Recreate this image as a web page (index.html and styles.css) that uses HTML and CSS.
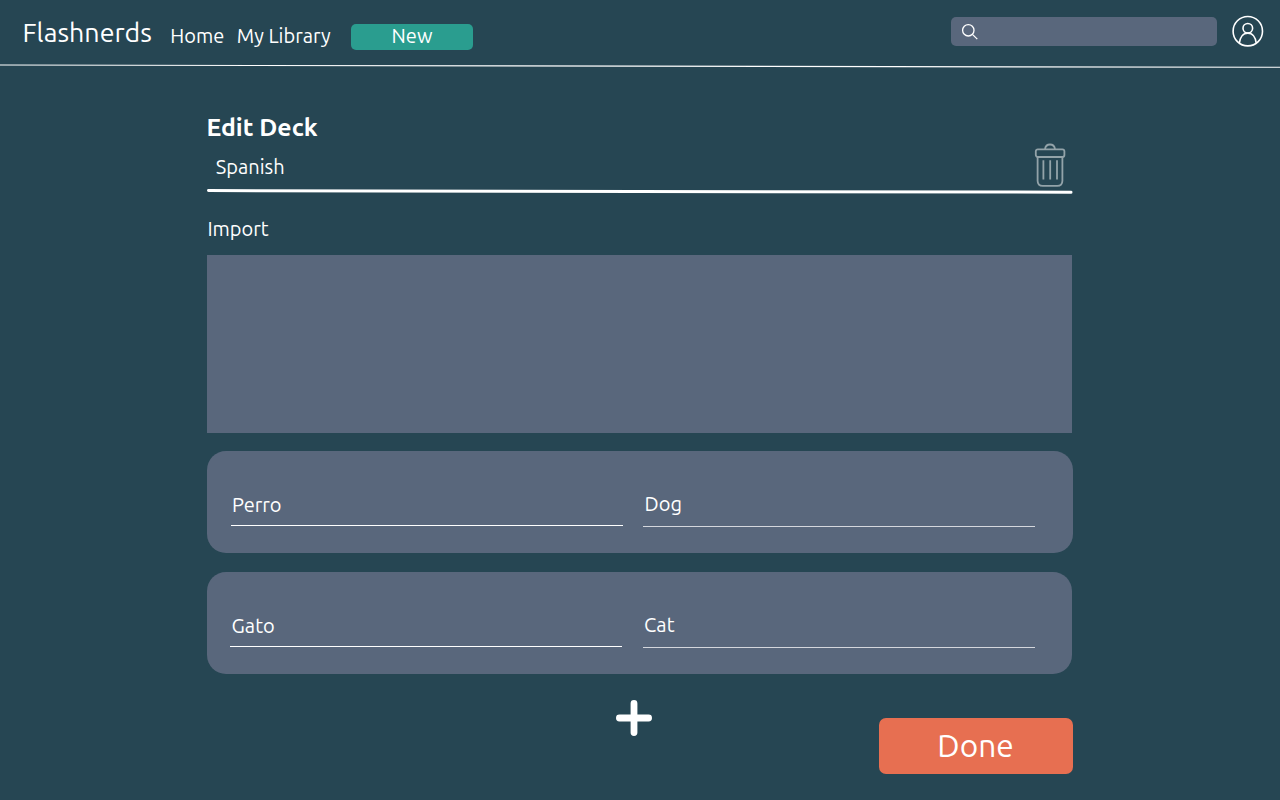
FILE: index.html
```html
<!DOCTYPE html>
<html lang="en">
<head>
<meta charset="utf-8">
<title>Flashnerds</title>
<link rel="stylesheet" href="styles.css">
</head>
<body>
<header class="topbar">
  <div class="brand">Flashnerds</div>
  <nav class="nav">
    <a class="home">Home</a>
    <a class="library">My Library</a>
  </nav>
  <button class="new"><span>New</span></button>
  <div class="search">
    <svg width="18" height="18" viewBox="0 0 18 18" fill="none" stroke="#fff" stroke-width="1.3"><circle cx="7.3" cy="7.3" r="5.7"/><path d="M11.4 11.4L16.3 16.1"/></svg>
  </div>
  <svg class="avatar" width="32" height="32" viewBox="0 0 32 32" fill="none" stroke="#fff" stroke-width="1.6"><circle cx="15.800" cy="16.200" r="14.700"/><circle cx="15.800" cy="13.300" r="4.800"/><path d="M7.400 28C8 22.500 11 18.100 15.800 18.100S23.600 22.500 24.200 28"/></svg>
</header>
<svg class="divider" width="1280" height="6" viewBox="0 0 1280 6"><path d="M0 2L1280 4.300" stroke="#fff" stroke-width="1.100"/></svg>
<main class="editor">
  <h1 class="heading">Edit Deck</h1>
  <div class="title-row">
    <div class="deck-name">Spanish</div>
    <svg class="trash" width="32" height="44" viewBox="0 0 32 44" fill="none" stroke="#93a3a9" stroke-width="1.800"><path d="M11 6C11.500 2.800 13.200 1.500 16 1.500S20.500 2.800 21 6"/><rect x="1.800" y="6.300" width="28.600" height="7.700" rx="2"/><path d="M3.600 14V37.800Q3.600 42.900 8.800 42.900H23.200Q28.400 42.900 28.400 37.800V14M9.400 17.300V36.500M16.200 17.300V36.500M23 17.300V36.500"/></svg>
  </div>
  <svg class="title-line" width="866" height="6" viewBox="0 0 866 6"><path d="M1.500 2.600L864 4.200" stroke="#fff" stroke-width="3" stroke-linecap="round"/></svg>
  <div class="import-label">Import</div>
  <div class="import-box"></div>
  <section class="card first">
    <div class="field perro"><span>Perro</span></div>
    <div class="field dog"><span>Dog</span></div>
  </section>
  <section class="card second">
    <div class="field gato"><span>Gato</span></div>
    <div class="field cat"><span>Cat</span></div>
  </section>
  <footer class="actions">
    <svg class="plus" width="36" height="36" viewBox="0 0 36 36" stroke="#fff" stroke-width="6.800" stroke-linecap="round"><path d="M18 3.400V32.600M3.400 18H32.600"/></svg>
    <button class="done"><span>Done</span></button>
  </footer>
</main>
</body>
</html>
```
FILE: styles.css
```css
* { box-sizing: border-box; }
body {
  margin: 0;
  height: 800px;
  overflow: hidden;
  background: #264653;
  color: #fff;
  font: 20px/24px Ubuntu, "Noto Sans", sans-serif;
}
svg { display: block; flex: none; }
button {
  border: 0;
  padding: 0;
  color: inherit;
  font: inherit;
}
.topbar {
  display: flex;
  align-items: flex-start;
  height: 63px;
  padding-left: 22.500px;
}
.brand {
  width: 147.800px;
  padding-top: 16px;
  font-size: 26.800px;
  line-height: 32px;
  white-space: nowrap;
}
.nav { display: flex; padding-top: 24px; white-space: nowrap; }
.home { width: 66.500px; }
.library { width: 114.200px; }
.new {
  width: 122px;
  height: 26px;
  margin-top: 24px;
  border-radius: 5px;
  background: #2a9d8f;
  line-height: 24px;
}
.new span { display: block; margin-top: -2px; }
.search {
  width: 266px;
  height: 29px;
  margin: 16.500px 0 0 478.300px;
  padding: 6.500px 0 0 9.700px;
  border-radius: 5px;
  background: #59677c;
}
.avatar { margin: 15px 0 0 14.700px; }
.editor { width: 866px; margin: 43px 0 0 206.500px; }
.heading { margin: 0; font-size: 24.800px; line-height: 30px; font-weight: 700; }
.title-row {
  display: flex;
  justify-content: space-between;
  height: 46px;
  padding: 1px 7px 0 9.300px;
}
.deck-name { padding-top: 12px; }
.import-label { margin-top: 23px; padding-left: .9px; }
.import-box { width: 865.700px; height: 178px; margin-top: 13.700px; background: #59677c; }
.card {
  display: grid;
  grid-template-columns: 392px 392px;
  column-gap: 20.800px;
  height: 102px;
  margin-top: 18px;
  padding: 42px 0 0 24px;
  border-radius: 19px;
  background: #59677c;
}
.second { width: 865.700px; margin-top: 19.500px; padding-left: 23.500px; }
.field { height: 33px; padding-left: 1.600px; border-bottom: 1px solid #fff; }
.dog, .cat { height: 34px; padding-left: 1.300px; border-color: #d4d7dd; }
.dog span, .cat span { display: block; margin-top: -1px; }
.actions {
  display: flex;
  justify-content: space-between;
  padding: 26px 0 0 409px;
}
.done {
  width: 194px;
  height: 56px;
  margin-top: 18px;
  border-radius: 7px;
  background: #e76f51;
  font-size: 31.600px;
  line-height: 56px;
}
```
